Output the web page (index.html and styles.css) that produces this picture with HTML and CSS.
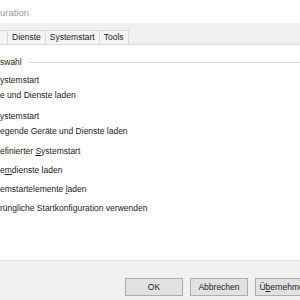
FILE: index.html
```html
<!DOCTYPE html>
<html lang="de">
<head>
<meta charset="utf-8">
<title>Systemkonfiguration</title>
<link rel="stylesheet" href="styles.css">
</head>
<body>
<div class="window">
  <div class="titlebar"><span class="title">uration</span></div>
  <div class="tabstrip">
    <div class="tab tab-cut"></div>
    <div class="tab">Dienste</div>
    <div class="tab">Systemstart</div>
    <div class="tab">Tools</div>
  </div>
  <div class="panel">
    <div class="group">
      <div class="legend"><span>swahl</span><span class="rule"></span></div>
      <div class="opt o1">ystemstart</div>
      <div class="opt o2">e und Dienste laden</div>
      <div class="opt o3">ystemstart</div>
      <div class="opt o4">egende Geräte und Dienste laden</div>
      <div class="opt o5">efinierter <u>S</u>ystemstart</div>
      <div class="opt o6">e<u>m</u>dienste laden</div>
      <div class="opt o7">emstartelemente <u>l</u>aden</div>
      <div class="opt o8">rüngliche Startkonfiguration verwenden</div>
    </div>
  </div>
  <div class="footer">
    <button class="btn">OK</button>
    <button class="btn">Abbrechen</button>
    <button class="btn">Ü<u>b</u>ernehmen</button>
  </div>
</div>
</body>
</html>
```
FILE: styles.css
```css
html, body {
  margin: 0;
  padding: 0;
  background: #ffffff;
}
.window {
  width: 300px;
  height: 300px;
  overflow: hidden;
  display: flex;
  flex-direction: column;
  font-family: "Liberation Sans", Arial, sans-serif;
  font-size: 8.5px;
  color: #222222;
}
.titlebar {
  height: 23px;
  background: #ffffff;
  display: flex;
  align-items: center;
  flex: none;
}
.title {
  color: #9a9a9a;
  font-size: 9.5px;
  margin-top: 1px;
}
.tabstrip {
  height: 21px;
  background: #f0f0f0;
  display: flex;
  align-items: flex-end;
  flex: none;
}
.tab {
  height: 13px;
  line-height: 13px;
  padding: 0 4px;
  border: 1px solid #d9d9d9;
  border-bottom: none;
  margin-right: -1px;
  background: #f5f5f5;
  color: #1a1a1a;
}
.tab-cut {
  width: 0;
  padding: 0 0 0 7px;
  border-left: none;
}
.panel {
  flex: none;
  height: 217px;
  background: #ffffff;
  border-top: 1px solid #dcdcdc;
  border-bottom: 1px solid #dcdcdc;
  box-sizing: border-box;
  padding-top: 12px;
}
.group {
  display: flex;
  flex-direction: column;
}
.legend {
  display: flex;
  align-items: center;
  height: 10px;
  gap: 6px;
}
.rule {
  flex: 1;
  height: 1px;
  background: #dcdcdc;
}
.opt {
  height: 10px;
  line-height: 10px;
  white-space: nowrap;
}
.o1 { margin-top: 8px; }
.o2 { margin-top: 5px; }
.o3 { margin-top: 11px; }
.o4 { margin-top: 5px; }
.o5 { margin-top: 10px; }
.o6 { margin-top: 9px; }
.o7 { margin-top: 9px; }
.o8 { margin-top: 9px; }
.footer {
  flex: 1;
  background: #f0f0f0;
  display: flex;
  align-items: flex-start;
  padding: 17px 0 0 125px;
  gap: 7px;
}
.btn {
  flex: none;
  width: 58px;
  height: 18px;
  padding: 0;
  margin: 0;
  background: #e1e1e1;
  border: 1px solid #adadad;
  font-family: "Liberation Sans", Arial, sans-serif;
  font-size: 8.5px;
  color: #222222;
  text-align: center;
}
u { text-decoration: underline; text-underline-offset: 1px; }
```
